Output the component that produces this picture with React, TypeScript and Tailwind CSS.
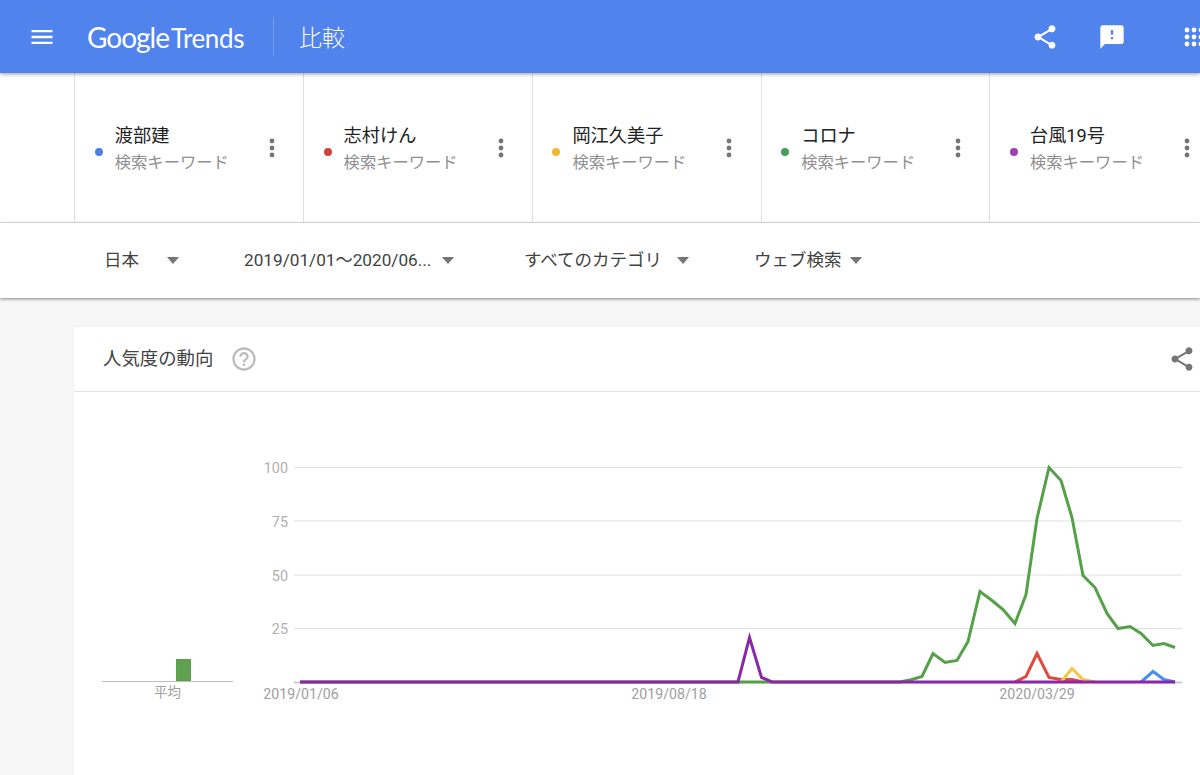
const terms = [
  { name: '渡部建', color: 'bg-[#4f7fe8]' },
  { name: '志村けん', color: 'bg-[#cf4337]' },
  { name: '岡江久美子', color: 'bg-[#f2b632]' },
  { name: 'コロナ', color: 'bg-[#44a05a]' },
  { name: '台風19号', color: 'bg-[#9c3fb5]' },
];

const filters = [
  { label: '日本', className: 'w-[140px]', textWidth: 'w-[63px]', size: 'text-[17.5px]' },
  { label: '2019/01/01〜2020/06...', className: 'w-[280px]', textWidth: 'w-[198px]', size: 'text-[17.2px]' },
  { label: 'すべてのカテゴリ', className: 'w-[230px]', textWidth: 'w-[153px]', size: 'text-[17.5px]' },
  { label: 'ウェブ検索', className: 'w-[120px]', textWidth: 'w-[96px]', size: 'text-[17.5px]' },
];

const green = '300,681.5 900,681.5 912,679 922,676 933,653 945,662 957,660 968,641 980,591 992,600 1003,609 1015,623 1026,594 1037,518 1049,467 1061,480 1072,517 1083,575 1095,587 1107,613 1118,628 1130,626 1141,633 1153,645 1164,643 1175,647';
const red = '1015,681.5 1026,676 1037,653 1049,677 1061,679 1072,679 1083,681.5';
const yellow = '1061,681.5 1072,668 1083,679 1095,681.5';
const blue = '1141,681.5 1153,671 1164,679 1175,681.5';
const purple = '300,681.5 738,681.5 749.5,637 761.5,677 772,681.5 1175,681.5';

const sharePath = 'M18 16.08c-.76 0-1.44.3-1.96.77L8.91 12.7c.05-.23.09-.46.09-.7s-.04-.47-.09-.7l7.05-4.11c.54.5 1.25.81 2.04.81 1.66 0 3-1.34 3-3s-1.34-3-3-3-3 1.34-3 3c0 .24.04.47.09.7L8.04 9.81C7.5 9.31 6.79 9 6 9c-1.66 0-3 1.34-3 3s1.34 3 3 3c.79 0 1.5-.31 2.04-.81l7.12 4.16c-.05.21-.08.43-.08.65 0 1.61 1.31 2.92 2.92 2.92s2.92-1.31 2.92-2.92-1.31-2.92-2.92-2.92z';

function Icon({ d, className }: { d: string; className: string }) {
  return (
    <svg viewBox="0 0 24 24" className={className} fill="currentColor">
      <path d={d} />
    </svg>
  );
}

function Kebab() {
  return (
    <svg viewBox="0 0 6 20" className="w-[6px] h-[20px] text-[#757575]" fill="currentColor">
      <circle cx="3" cy="3" r="2.4" />
      <circle cx="3" cy="10" r="2.4" />
      <circle cx="3" cy="17" r="2.4" />
    </svg>
  );
}

function AppsIcon() {
  return (
    <svg viewBox="0 0 24 24" className="w-[24px] h-[24px] text-white shrink-0" fill="currentColor">
      {[5, 12, 19].map((y) =>
        [5, 12, 19].map((x) => <circle key={`${x}-${y}`} cx={x} cy={y} r="2.4" />)
      )}
    </svg>
  );
}

function Header() {
  return (
    <header className="relative z-20 h-[73px] bg-[#5183ec] text-white flex items-center shadow-[0_1px_4px_rgba(0,0,0,0.4)]">
      <Icon
        d="M3 18h18v-2H3v2zm0-5h18v-2H3v2zm0-7v2h18V6H3z"
        className="w-[28px] h-[28px] ml-[28px] shrink-0"
      />
      <div className="ml-[31px] w-[186px] shrink-0 flex items-baseline font-['Lato',sans-serif] leading-none">
        <span className="text-[28px] tracking-[-1px]">Google</span>
        <span className="text-[26px] font-normal ml-[2px] tracking-[-0.4px]">Trends</span>
      </div>
      <div className="w-px h-[39px] bg-white/20 shrink-0" />
      <div className="ml-[25px] text-[23px] font-['Noto_Sans_CJK_JP',sans-serif] font-light">比較</div>
      <div className="ml-auto flex items-center gap-[39px] mr-[-6px]">
        <Icon d={sharePath} className="w-[28px] h-[28px]" />
        <Icon
          d="M20 2H4c-1.1 0-1.99.9-1.99 2L2 22l4-4h14c1.1 0 2-.9 2-2V4c0-1.1-.9-2-2-2zm-7 12h-2v-2h2v2zm0-4h-2V6h2v4z"
          className="w-[28px] h-[28px]"
        />
        <div className="ml-[17px]">
          <AppsIcon />
        </div>
      </div>
    </header>
  );
}

function TermBar() {
  return (
    <div className="h-[150px] bg-white border-b border-[#e0e0e0] flex pl-[74.3px] overflow-hidden">
      {terms.map((term) => (
        <div key={term.name} className="w-[228.8px] shrink-0 border-l-[1.5px] border-[#e0e0e0] flex items-center pl-[19.5px] pt-[1px]">
          <span className={`w-[8px] h-[8px] mt-[8px] rounded-full shrink-0 ${term.color}`} />
          <div className="ml-[12px] w-[147px] pt-[3px]">
            <div className="text-[18.2px] leading-[26px] text-[#212121]">{term.name}</div>
            <div className="text-[16.3px] leading-[27px] text-[#8f8f8f]">検索キーワード</div>
          </div>
          <div className="ml-[7px]">
            <Kebab />
          </div>
        </div>
      ))}
    </div>
  );
}

function FilterBar() {
  return (
    <div className="relative z-10 h-[75px] bg-white flex items-center pl-[104px] shadow-[0_1px_3px_rgba(0,0,0,0.45)]">
      {filters.map((f) => (
        <div key={f.label} className={`${f.className} shrink-0 flex items-center`}>
          <span className={`${f.textWidth} ${f.size} shrink-0 text-[#424242] whitespace-nowrap`}>{f.label}</span>
          <span className="w-0 h-0 border-x-[6.5px] border-x-transparent border-t-[7px] border-t-[#757575]" />
        </div>
      ))}
    </div>
  );
}

function AverageBar() {
  return (
    <div className="w-[131px] shrink-0 ml-[28px] flex flex-col items-center pt-[266px]">
      <div className="w-full h-[24px] border-b-[1.5px] border-[#bdbdbd] flex justify-center items-end">
        <div className="w-[15px] h-[22px] bg-[#60a151] border border-[#55a049] ml-[32px]" />
      </div>
      <div className="text-[13.5px] leading-[20px] text-[#9e9e9e]">平均</div>
    </div>
  );
}

function TrendChart() {
  return (
    <svg viewBox="250 391.5 950 384" className="w-[950px] h-[384px] shrink-0 ml-[17px]">
      {[467, 520.5, 574.5, 628].map((y) => (
        <line key={y} x1="294" x2="1182" y1={y} y2={y} stroke="#e0e0e0" strokeWidth="1.2" />
      ))}
      <line x1="294" x2="1182" y1="682" y2="682" stroke="#bdbdbd" strokeWidth="1.5" />
      <g fontSize="14.4" fill="#b0b0b0" textAnchor="end" fontFamily="Roboto, sans-serif">
        <text x="288" y="472">100</text>
        <text x="288" y="526">75</text>
        <text x="288" y="580">50</text>
        <text x="288" y="633">25</text>
      </g>
      <g fontSize="14.2" fill="#9e9e9e" textAnchor="middle" fontFamily="Roboto, sans-serif">
        <text x="301" y="698">2019/01/06</text>
        <text x="669" y="698">2019/08/18</text>
        <text x="1037" y="698">2020/03/29</text>
      </g>
      <g fill="none" strokeWidth="3" strokeLinejoin="miter">
        <polyline points={blue} stroke="#4a90f0" />
        <polyline points={red} stroke="#e04a3a" />
        <polyline points={yellow} stroke="#f6c744" />
        <polyline points={green} stroke="#55a049" />
        <polyline points={purple} stroke="#8a26a8" />
      </g>
    </svg>
  );
}

function InterestCard() {
  return (
    <section className="ml-[74px] mt-[29px] w-[1150px] bg-white shadow-[0_0_1px_rgba(0,0,0,0.08)]">
      <div className="h-[65px] border-b border-[#e0e0e0] flex items-center pl-[29px]">
        <h2 className="text-[18.4px] text-[#424242] font-normal">人気度の動向</h2>
        <Icon
          d="M11 18h2v-2h-2v2zm1-16C6.48 2 2 6.48 2 12s4.48 10 10 10 10-4.48 10-10S17.52 2 12 2zm0 18c-4.41 0-8-3.59-8-8s3.59-8 8-8 8 3.59 8 8-3.59 8-8 8zm0-14c-2.21 0-4 1.79-4 4h2c0-1.1.9-2 2-2s2 .9 2 2c0 2-3 1.75-3 5h2c0-2.25 3-2.5 3-5 0-2.21-1.79-4-4-4z"
          className="w-[28px] h-[28px] ml-[17px] mb-[1px] text-[#bdbdbd]"
        />
        <Icon d={sharePath} className="w-[28px] h-[28px] ml-[910px] text-[#757575]" />
      </div>
      <div className="flex h-[384px]">
        <AverageBar />
        <TrendChart />
      </div>
    </section>
  );
}

export default function App() {
  return (
    <div className="w-[1200px] h-[775px] overflow-hidden bg-[#f6f6f6] font-['Roboto','Noto_Sans_CJK_JP',sans-serif]">
      <Header />
      <TermBar />
      <FilterBar />
      <InterestCard />
    </div>
  );
}
